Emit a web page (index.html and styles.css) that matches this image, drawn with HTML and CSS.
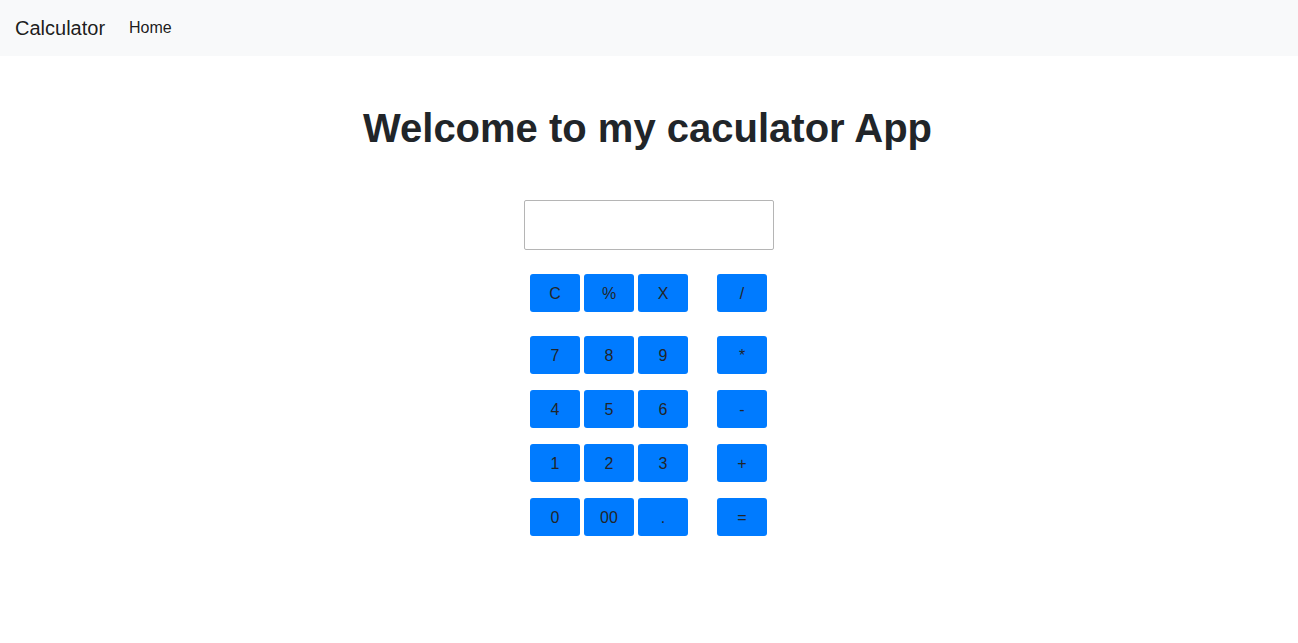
FILE: index.html
```html
<!DOCTYPE html>
<html lang="en">
<head>
<meta charset="utf-8">
<title>Calculator</title>
<link rel="stylesheet" href="styles.css">
</head>
<body>
<nav class="navbar">
  <a class="brand" href="#">Calculator</a>
  <a class="nav-link" href="#">Home</a>
</nav>
<main class="main">
  <h1 class="title">Welcome to my caculator App</h1>
  <input class="display" type="text">
  <div class="keypad">
    <div class="row row-top">
      <div class="group"><button class="key">C</button><button class="key">%</button><button class="key">X</button></div>
      <button class="key">/</button>
    </div>
    <div class="row">
      <div class="group"><button class="key">7</button><button class="key">8</button><button class="key">9</button></div>
      <button class="key">*</button>
    </div>
    <div class="row">
      <div class="group"><button class="key">4</button><button class="key">5</button><button class="key">6</button></div>
      <button class="key">-</button>
    </div>
    <div class="row">
      <div class="group"><button class="key">1</button><button class="key">2</button><button class="key">3</button></div>
      <button class="key">+</button>
    </div>
    <div class="row">
      <div class="group"><button class="key">0</button><button class="key">00</button><button class="key">.</button></div>
      <button class="key">=</button>
    </div>
  </div>
</main>
</body>
</html>
```

FILE: styles.css
```css
* { box-sizing: border-box; }
body {
  margin: 0;
  font-family: "Liberation Sans", Arial, sans-serif;
  font-size: 16px;
  line-height: 1.5;
  color: #212529;
  background: #fff;
}
.navbar {
  display: flex;
  align-items: center;
  height: 56px;
  padding: 8px 16px 8px 15px;
  background: #f8f9fa;
}
.brand {
  font-size: 20px;
  line-height: 30px;
  color: rgba(0,0,0,.9);
  text-decoration: none;
  margin-right: 16px;
}
.nav-link {
  padding: 8px;
  color: rgba(0,0,0,.9);
  text-decoration: none;
  font-size: 16px;
  line-height: 24px;
}
.main {
  display: flex;
  flex-direction: column;
  align-items: center;
}
.title {
  margin: 48px 0 48px;
  padding-right: 3px;
  font-size: 40px;
  line-height: 48px;
  font-weight: 700;
  color: #212529;
}
.display {
  width: 250px;
  height: 50px;
  border: 1px solid #b5b5b5;
  border-radius: 2px;
  font-size: 16px;
  padding: 4px 8px;
}
.keypad {
  display: flex;
  flex-direction: column;
  gap: 16px;
  margin-top: 24px;
  margin-right: 1px;
}
.row {
  display: flex;
  gap: 29px;
}
.row-top { margin-bottom: 8px; }
.group {
  display: flex;
  gap: 4px;
}
.key {
  width: 50px;
  height: 38px;
  border: none;
  border-radius: 3px;
  background: #007bff;
  color: #212529;
  font-family: "Liberation Sans", Arial, sans-serif;
  font-size: 16px;
  padding: 1px 0 0;
}
```
